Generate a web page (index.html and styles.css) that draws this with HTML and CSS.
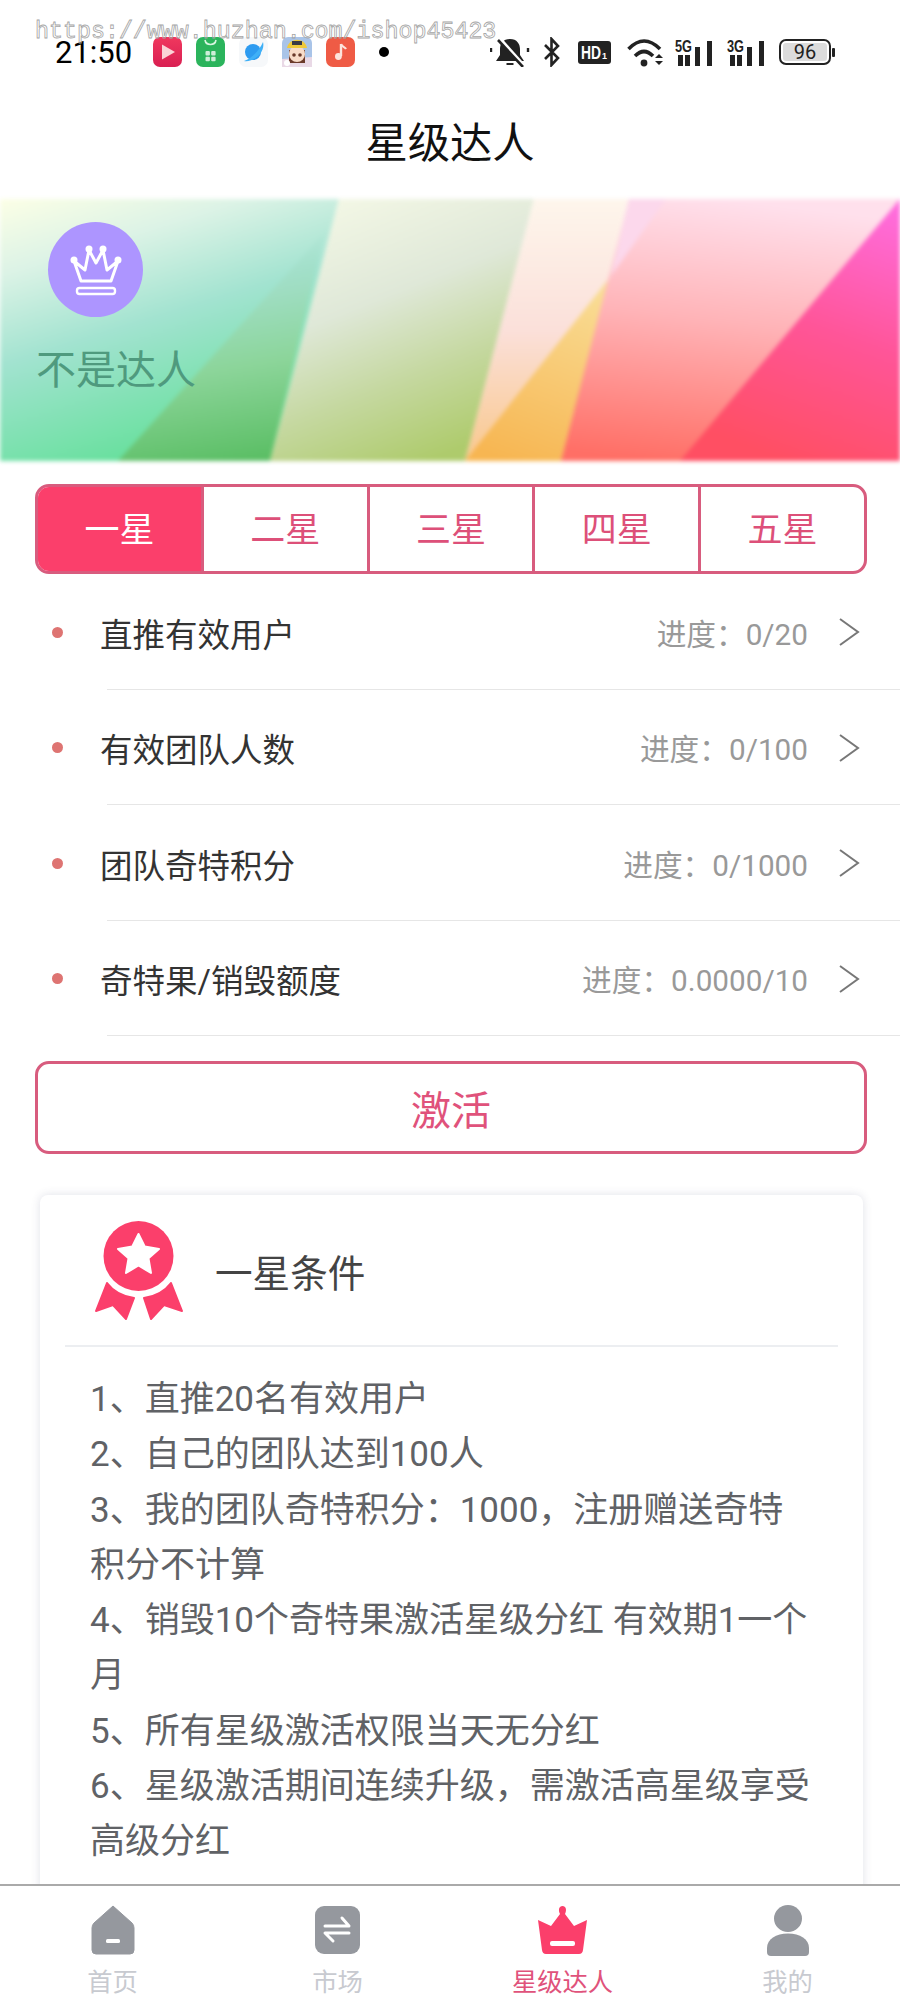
FILE: index.html
```html
<!DOCTYPE html>
<html lang="zh-CN">
<head>
  <meta charset="UTF-8">
  <meta name="viewport" content="width=device-width, initial-scale=1.0">
  <title>星级达人</title>
  <link rel="stylesheet" href="styles.css">
</head>
<body>
<div class="page">
  <div class="watermark">https://www.huzhan.com/ishop45423</div>

  <div class="status">
    <span class="time">21:50</span>
    <div class="apps">
      <svg width="29" height="30" viewBox="0 0 29 30"><defs><linearGradient id="appRed" x1="0" y1="0" x2="0" y2="1"><stop offset="0" stop-color="#f0385e"/><stop offset="1" stop-color="#d91f52"/></linearGradient></defs><rect width="29" height="30" rx="7" fill="url(#appRed)"/><path d="M9 7.500 L22 15 L9 22.500 Z" fill="#fbd3d6"/></svg>
      <svg width="29" height="30" viewBox="0 0 29 30"><rect width="29" height="30" rx="7" fill="#2bb45c"/><path d="M9 3 C10 9 19 9 20 3" fill="none" stroke="#d8f5e0" stroke-width="1.6"/><rect x="9.500" y="14" width="4.400" height="4.400" rx="1" fill="#cdeed8"/><rect x="15.200" y="14" width="4.400" height="4.400" rx="1" fill="#cdeed8"/><rect x="9.500" y="19.800" width="4.400" height="4.400" rx="1" fill="#cdeed8"/><rect x="15.200" y="19.800" width="4.400" height="4.400" rx="1" fill="#cdeed8"/></svg>
      <svg width="29" height="30" viewBox="0 0 29 30"><rect width="29" height="30" rx="7" fill="#f6f8fa"/><circle cx="14" cy="15" r="8" fill="#2d9bf0"/><path d="M5 24 C12 22 21 13 24 5 C25 9 24 13 21 17 C17 22 10 25 5 24 Z" fill="#3fb0f7"/></svg>
      <svg width="30" height="30" viewBox="0 0 30 30"><rect width="30" height="30" rx="6" fill="#a9c4e8"/><path d="M0 22 L30 20 V30 H0 Z" fill="#e9d9e6"/><path d="M7 13 L7 26 L23 26 L23 13 Z" fill="#6b3a2a"/><circle cx="15" cy="17" r="8" fill="#f8dcc8"/><path d="M5 11 C7 0 23 0 25 11 Z" fill="#efc93c"/><rect x="10" y="4" width="10" height="4" fill="#3a3a44"/><circle cx="12" cy="18" r="1.800" fill="#6a3a2a"/><circle cx="18" cy="18" r="1.800" fill="#6a3a2a"/><circle cx="5" cy="26" r="3" fill="#fff"/></svg>
      <svg width="29" height="30" viewBox="0 0 29 30"><rect width="29" height="30" rx="7" fill="#ef5b45"/><path d="M15 7 L15 19" stroke="#fde4dc" stroke-width="2.400"/><circle cx="12.400" cy="19.500" r="3.400" fill="#fde4dc"/><path d="M15 7 C16 10 19 10 20 12" fill="none" stroke="#fde4dc" stroke-width="2.200"/></svg>
    </div>
    <span class="status-dot"></span>
    <div class="sys">
      <svg class="sys-bell" width="40" height="30" viewBox="0 0 40 30"><path d="M20 2 C13 2 10 7 10 12 L10 18 L6 24 L34 24 L30 18 L30 12 C30 7 27 2 20 2 Z" fill="#222"/><path d="M16.500 26 H23.500 V28 H16.500 Z" fill="#222"/><path d="M8 0 L33 28" stroke="#fff" stroke-width="4"/><path d="M8 3 L33 30" stroke="#222" stroke-width="2.600"/><path d="M1 11 V15 M38 11 V15" stroke="#222" stroke-width="2.400"/></svg>
      <svg class="sys-bt" width="17" height="30" viewBox="0 0 17 30"><path d="M2 8 L15 21 L8.500 28 V2 L15 9 L2 22" fill="none" stroke="#222" stroke-width="2.600"/></svg>
      <svg class="sys-hd" width="33" height="23" viewBox="0 0 33 23"><rect width="33" height="23" rx="3" fill="#222"/><text x="3" y="17.500" class="hd-text" textLength="20" lengthAdjust="spacingAndGlyphs">HD</text><text x="24" y="18" class="hd-sub">1</text></svg>
      <svg class="sys-wifi" width="36" height="29" viewBox="0 0 36 29"><path d="M1.500 11 Q17 -5 33 11" fill="none" stroke="#222" stroke-width="3.600"/><path d="M8 18 Q17 9 26 18" fill="none" stroke="#222" stroke-width="3.600"/><circle cx="17" cy="25" r="3.400" fill="#222"/><path d="M28 20 L36 20 L32 16 Z M28 23 L36 23 L32 27 Z" fill="#222"/></svg>
      <svg class="sys-sig" width="38" height="27" viewBox="0 0 38 27"><text x="0" y="13" class="sig-text" textLength="17" lengthAdjust="spacingAndGlyphs">5G</text><rect x="3" y="16" width="5" height="11" fill="#222"/><rect x="10" y="16" width="5" height="11" fill="#222"/><rect x="20" y="8" width="5" height="19" fill="#222"/><rect x="32" y="2" width="5" height="25" fill="#222"/></svg>
      <svg class="sys-sig" width="38" height="27" viewBox="0 0 38 27"><text x="0" y="13" class="sig-text" textLength="17" lengthAdjust="spacingAndGlyphs">3G</text><rect x="3" y="16" width="5" height="11" fill="#222"/><rect x="10" y="16" width="5" height="11" fill="#222"/><rect x="20" y="8" width="5" height="19" fill="#222"/><rect x="32" y="2" width="5" height="25" fill="#222"/></svg>
      <svg class="sys-batt" width="56" height="26" viewBox="0 0 56 26"><rect x="1" y="1" width="50" height="24" rx="6" fill="#fff" stroke="#222" stroke-width="2"/><rect x="4" y="4" width="44" height="18" rx="3" fill="#dcdcdc"/><rect x="53" y="9" width="3" height="9" rx="1" fill="#222"/><text x="26" y="20" class="batt-text">96</text></svg>
    </div>
  </div>

  <div class="title">星级达人</div>

  <div class="banner">
    <svg class="banner-bg" viewBox="0 0 900 262" preserveAspectRatio="none">
      <defs>
        <linearGradient id="bandA" x1="0" y1="0" x2="0.4" y2="1"><stop offset="0" stop-color="#fcffe6"/><stop offset="0.25" stop-color="#dcf3e6"/><stop offset="0.55" stop-color="#a2e3d0"/><stop offset="1" stop-color="#66e09c"/></linearGradient>
        <linearGradient id="bandB" x1="0.4" y1="0" x2="0.55" y2="1"><stop offset="0" stop-color="#a8e2d6" stop-opacity="0"/><stop offset="0.3" stop-color="#a0dcc0" stop-opacity="0.8"/><stop offset="0.6" stop-color="#8cd59a"/><stop offset="1" stop-color="#5cbf66"/></linearGradient>
        <linearGradient id="bandC" x1="0.2" y1="0" x2="0.6" y2="1"><stop offset="0" stop-color="#f4f8e6"/><stop offset="0.4" stop-color="#dfe8d8"/><stop offset="0.7" stop-color="#c5d8a0"/><stop offset="1" stop-color="#aecb6c"/></linearGradient>
        <linearGradient id="bandD" x1="0" y1="0" x2="0" y2="1"><stop offset="0" stop-color="#fef6ec"/><stop offset="0.5" stop-color="#fbe0da"/><stop offset="1" stop-color="#f9c88c"/></linearGradient>
        <linearGradient id="bandO" x1="0.6" y1="0" x2="0.3" y2="1"><stop offset="0" stop-color="#f9dc94"/><stop offset="1" stop-color="#f7b652"/></linearGradient>
        <linearGradient id="bandE" x1="0.45" y1="0" x2="0.3" y2="1"><stop offset="0" stop-color="#ffe0ec"/><stop offset="0.45" stop-color="#ffb4b8"/><stop offset="1" stop-color="#ff6f66"/></linearGradient>
        <linearGradient id="bandF" x1="0.8" y1="0" x2="0.5" y2="1"><stop offset="0" stop-color="#ff6cdb"/><stop offset="0.5" stop-color="#ff5598"/><stop offset="1" stop-color="#ff4f63"/></linearGradient>
      </defs>
      <polygon points="0,0 339,0 270,262 0,262" fill="url(#bandA)"/>
      <polygon points="118,262 324,34 270,262" fill="url(#bandB)"/>
      <polygon points="339,0 534,0 465,262 270,262" fill="url(#bandC)"/>
      <polygon points="534,0 629,0 561,262 465,262" fill="url(#bandD)"/>
      <polygon points="465,262 611,77 561,262" fill="url(#bandO)"/>
      <polygon points="629,0 900,0 900,262 561,262" fill="url(#bandE)"/>
      <polygon points="629,0 666,0 611,77" fill="#fcd8ec"/>
      <polygon points="900,0 900,262 680,262" fill="url(#bandF)"/>
    </svg>
    <div class="avatar">
      <svg width="54" height="54" viewBox="0 0 54 54"><path d="M12 38 L5 18 L16 27 L20 7 L27 20 L34 7 L38 27 L49 18 L42 38 Z" fill="none" stroke="#fff" stroke-width="3" stroke-linejoin="round"/><circle cx="5" cy="17" r="3.500" fill="#fff"/><circle cx="49" cy="17" r="3.500" fill="#fff"/><circle cx="20" cy="6" r="3.500" fill="#fff"/><circle cx="34" cy="6" r="3.500" fill="#fff"/><rect x="8" y="45" width="38" height="6" rx="2.500" fill="none" stroke="#fff" stroke-width="2.400"/></svg>
    </div>
    <div class="banner-name">不是达人</div>
  </div>

  <div class="tabs">
    <div class="tab tab-on">一星</div>
    <div class="tab">二星</div>
    <div class="tab">三星</div>
    <div class="tab">四星</div>
    <div class="tab">五星</div>
  </div>

  <div class="rows">
    <div class="row">
      <span class="bullet"></span>
      <span class="row-name">直推有效用户</span>
      <span class="row-prog">进度：0/20</span>
      <svg class="chev" width="22" height="28" viewBox="0 0 22 28"><path d="M2 1 L20 14 L2 27" fill="none" stroke="#777" stroke-width="2"/></svg>
    </div>
    <div class="row-sep"></div>
    <div class="row">
      <span class="bullet"></span>
      <span class="row-name">有效团队人数</span>
      <span class="row-prog">进度：0/100</span>
      <svg class="chev" width="22" height="28" viewBox="0 0 22 28"><path d="M2 1 L20 14 L2 27" fill="none" stroke="#777" stroke-width="2"/></svg>
    </div>
    <div class="row-sep"></div>
    <div class="row">
      <span class="bullet"></span>
      <span class="row-name">团队奇特积分</span>
      <span class="row-prog">进度：0/1000</span>
      <svg class="chev" width="22" height="28" viewBox="0 0 22 28"><path d="M2 1 L20 14 L2 27" fill="none" stroke="#777" stroke-width="2"/></svg>
    </div>
    <div class="row-sep"></div>
    <div class="row">
      <span class="bullet"></span>
      <span class="row-name">奇特果/销毁额度</span>
      <span class="row-prog">进度：0.0000/10</span>
      <svg class="chev" width="22" height="28" viewBox="0 0 22 28"><path d="M2 1 L20 14 L2 27" fill="none" stroke="#777" stroke-width="2"/></svg>
    </div>
    <div class="row-sep"></div>
  </div>

  <div class="activate">激活</div>

  <div class="card">
    <div class="card-head">
      <svg class="medal" width="89" height="99" viewBox="0 0 89 99"><circle cx="43.500" cy="35" r="35" fill="#fb3f6b"/><path d="M43.500 13 L49.700 25.500 L64 28 L53.500 37.300 L56 52 L43.500 44.500 L31 52 L33.500 37.300 L23 28 L37.300 25.500 Z" fill="#fff" stroke="#fff" stroke-width="2" stroke-linejoin="round"/><path d="M12 62 C18 70 26 75 39 77 L31 98 L18 84 L1 90 Z" fill="#fb3f6b" stroke="#fb3f6b" stroke-linejoin="round" stroke-width="2"/><path d="M76 62 C70 70 62 75 49 77 L56 98 L69 84 L87 90 Z" fill="#fb3f6b" stroke="#fb3f6b" stroke-linejoin="round" stroke-width="2"/></svg>
      <span class="card-title">一星条件</span>
    </div>
    <div class="card-sep"></div>
    <div class="card-body">
      <p>1、直推20名有效用户</p>
      <p>2、自己的团队达到100人</p>
      <p>3、我的团队奇特积分：1000，注册赠送奇特积分不计算</p>
      <p>4、销毁10个奇特果激活星级分红 有效期1一个月</p>
      <p>5、所有星级激活权限当天无分红</p>
      <p>6、星级激活期间连续升级，需激活高星级享受高级分红</p>
    </div>
  </div>

  <div class="tabbar">
    <div class="nav">
      <svg width="44" height="49" viewBox="0 0 44 49"><path d="M22 0 L41 17 Q43 19 43 22 V44 Q43 48 39 48 H5 Q1 48 1 44 V22 Q1 19 3 17 Z" fill="#95989e" stroke="#95989e" stroke-linejoin="round"/><rect x="15" y="33" width="14" height="4" rx="1.500" fill="#fff"/></svg>
      <span class="nav-label">首页</span>
    </div>
    <div class="nav">
      <svg width="45" height="49" viewBox="0 0 45 49"><rect width="45" height="48" rx="9" fill="#95989e"/><path d="M10 20 H34 L27 12" fill="none" stroke="#fff" stroke-width="3" stroke-linecap="round" stroke-linejoin="round"/><path d="M34 27 H10 L18 35" fill="none" stroke="#fff" stroke-width="3" stroke-linecap="round" stroke-linejoin="round"/></svg>
      <span class="nav-label">市场</span>
    </div>
    <div class="nav nav-on">
      <svg width="51" height="49" viewBox="0 0 51 49"><path d="M25.500 0 C29 0 30 4 28 8 L37 20 L50 14 L46 44 Q45.500 48 42 48 H9 Q5.500 48 5 44 L1 14 L14 20 L23 8 C21 4 22 0 25.500 0 Z" fill="#fb3f6b"/><rect x="13" y="35" width="25" height="5" rx="2" fill="#fff"/></svg>
      <span class="nav-label">星级达人</span>
    </div>
    <div class="nav">
      <svg width="44" height="51" viewBox="0 0 44 51"><ellipse cx="22" cy="13.500" rx="14" ry="13.500" fill="#95989e"/><path d="M1 47 V43 C1 34 10 28.500 22 28.500 C34 28.500 43 34 43 43 V47 Q43 51 39 51 H5 Q1 51 1 47 Z" fill="#95989e"/></svg>
      <span class="nav-label">我的</span>
    </div>
  </div>
</div>
</body>
</html>
```

FILE: styles.css
```css
body {
  margin: 0;
  background-color: #fff;
  font-family: Roboto, "Noto Sans CJK SC", sans-serif;
}

.page {
  position: relative;
  width: 900px;
  height: 2010px;
  overflow: hidden;
}

.watermark {
  position: absolute;
  left: 35px;
  top: 16px;
  font-family: "Liberation Mono", monospace;
  font-size: 23.3px;
  line-height: 32px;
  color: transparent;
  -webkit-text-stroke: 0.8px #a5a5a5;
  white-space: nowrap;
}

/* status bar */
.status {
  display: flex;
  align-items: center;
  height: 104px;
  padding-left: 55px;
  box-sizing: border-box;
}

.time {
  width: 98px;
  font-size: 31px;
  color: #000;
}

.apps {
  display: flex;
  align-items: center;
  gap: 14px;
}

.status-dot {
  width: 10px;
  height: 10px;
  margin-left: 24px;
  border-radius: 50%;
  background-color: #000;
}

.sys {
  display: flex;
  align-items: center;
  margin-left: 101px;
}

.sys-bt { margin-left: 13px; }
.sys-hd { margin-left: 18px; }
.sys-wifi { margin-left: 16px; }
.sys-sig { margin-left: 12px; }
.sys-sig + .sys-sig { margin-left: 14px; }
.sys-batt { margin-left: 14px; }

.hd-text {
  font-family: "Liberation Sans", sans-serif;
  font-size: 18px;
  font-weight: bold;
  fill: #fff;
}

.hd-sub {
  font-family: "Liberation Sans", sans-serif;
  font-size: 9px;
  font-weight: bold;
  fill: #fff;
}

.sig-text {
  font-family: "Liberation Sans", sans-serif;
  font-size: 16px;
  font-weight: bold;
  fill: #222;
}

.batt-text {
  font-family: Roboto, sans-serif;
  font-size: 20px;
  text-anchor: middle;
  fill: #222;
}

.title {
  height: 78px;
  margin-bottom: 17px;
  font-size: 42.3px;
  line-height: 80px;
  text-align: center;
  color: #111;
}

/* banner */
.banner {
  position: relative;
  height: 262px;
  box-sizing: border-box;
  padding: 23px 0 0 36px;
}

.banner-bg {
  position: absolute;
  left: 0;
  top: 0;
  width: 100%;
  height: 100%;
  filter: blur(2px);
}

.avatar {
  position: relative;
  display: flex;
  align-items: center;
  justify-content: center;
  width: 95px;
  height: 95px;
  margin-left: 12px;
  border-radius: 50%;
  background-color: #ad95ff;
}

.banner-name {
  position: relative;
  margin-top: 30px;
  font-size: 40px;
  line-height: 48px;
  color: #4f9a7e;
}

/* star tabs */
.tabs {
  display: flex;
  height: 90px;
  margin: 23px 33px 0 35px;
  box-sizing: border-box;
  border: 3px solid #d85c7e;
  border-radius: 14px;
  overflow: hidden;
}

.tab {
  flex: 1;
  font-size: 35px;
  line-height: 88px;
  text-align: center;
  color: #dd5079;
  border-left: 3px solid #d85c7e;
}

.tab:first-child {
  border-left: none;
}

.tab-on {
  background-color: #fb3f6b;
  color: #fff;
}

/* progress rows */
.row {
  display: flex;
  align-items: center;
  height: 114.5px;
  padding: 2px 40px 0 52px;
  box-sizing: border-box;
}

.row-sep {
  height: 1px;
  margin-left: 107px;
  background-color: #e6e6e6;
}

.bullet {
  width: 11px;
  height: 11px;
  border-radius: 50%;
  background-color: #de7472;
}

.row-name {
  flex: 1;
  margin-left: 37px;
  font-size: 32.5px;
  color: #333;
}

.row-prog {
  font-size: 29.7px;
  color: #999;
}

.chev {
  margin-left: 30px;
}

.activate {
  height: 93px;
  margin: 25px 33px 0 35px;
  padding-top: 4px;
  box-sizing: border-box;
  border: 3px solid #d85c7e;
  border-radius: 14px;
  font-size: 40px;
  line-height: 87px;
  text-align: center;
  color: #e0527b;
}

/* conditions card */
.card {
  height: 760px;
  margin: 41px 37px 0 40px;
  border-radius: 8px;
  background-color: #fff;
  box-shadow: 0 0 10px rgba(60, 70, 110, 0.16);
}

.card-head {
  display: flex;
  align-items: center;
  height: 150px;
  padding-left: 55px;
  box-sizing: border-box;
}

.card-title {
  margin-left: 31px;
  font-size: 37.6px;
  color: #444;
}

.card-sep {
  height: 2px;
  margin: 0 25px;
  background-color: #eceef1;
}

.card-body {
  padding: 25px 50px 0 50px;
  font-size: 35px;
  line-height: 55.3px;
  color: #606266;
}

.card-body p {
  margin: 0;
}

/* bottom nav */
.tabbar {
  position: absolute;
  left: 0;
  right: 0;
  bottom: 0;
  display: flex;
  height: 126px;
  box-sizing: border-box;
  border-top: 2px solid #aaa;
  padding-top: 19px;
  background-color: #fff;
}

.nav {
  display: flex;
  flex: 1;
  flex-direction: column;
  align-items: center;
}

.nav svg {
  height: 51px;
}

.nav-label {
  margin-top: 12px;
  font-size: 25.3px;
  line-height: 30px;
  color: #c8cad0;
}

.nav-on .nav-label {
  color: #e0527b;
}
```
